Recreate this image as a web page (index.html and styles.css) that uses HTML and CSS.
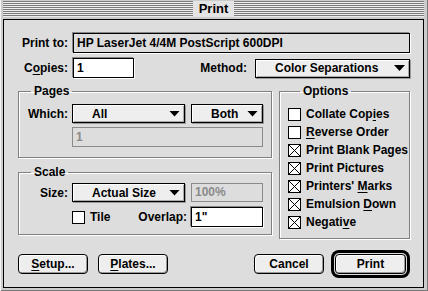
FILE: index.html
```html
<!DOCTYPE html>
<html>
<head>
<meta charset="utf-8">
<link rel="stylesheet" href="styles.css">
</head>
<body>
<div class="window">
  <div class="titlebar"><div class="stripes"></div><span class="title">Print</span><div class="stripes"></div></div>
  <div class="content">
    <div class="row r-printto">
      <span class="lbl">Print to:</span>
      <div class="static">HP LaserJet 4/4M PostScript 600DPI</div>
    </div>
    <div class="row r-copies">
      <span class="lbl">C<u>o</u>pies:</span>
      <div class="edit copies">1</div>
      <span class="lbl method-lbl">Method:</span>
      <div class="popup method"><span>Color Separations</span><i class="arrow"></i></div>
    </div>
    <div class="main">
      <div class="leftcol">
        <fieldset class="group pages">
          <legend>Pages</legend>
          <div class="grow">
            <span class="lbl">Which:</span>
            <div class="popup which"><span>All</span><i class="arrow"></i></div>
            <div class="popup both"><span>Both</span><i class="arrow"></i></div>
          </div>
          <div class="grow range-row">
            <div class="edit disabled range">1</div>
          </div>
        </fieldset>
        <fieldset class="group scale">
          <legend>Scale</legend>
          <div class="grow">
            <span class="lbl">Size:</span>
            <div class="popup which"><span>Actual Size</span><i class="arrow"></i></div>
            <div class="edit disabled pct">100%</div>
          </div>
          <div class="grow tile-row">
            <span class="check"><i class="box"></i><span class="t">Tile</span></span>
            <span class="lbl overlap-lbl">Overlap:</span>
            <div class="edit overlap">1"</div>
          </div>
        </fieldset>
      </div>
      <fieldset class="group options">
        <legend>Options</legend>
        <span class="check"><i class="box"></i><span class="t">Collate Cop<u>i</u>es</span></span>
        <span class="check"><i class="box"></i><span class="t"><u>R</u>everse Order</span></span>
        <span class="check"><i class="box on"></i><span class="t">Print Blank Pages</span></span>
        <span class="check"><i class="box on"></i><span class="t">Print Pictures</span></span>
        <span class="check"><i class="box on"></i><span class="t">Printers' <u>M</u>arks</span></span>
        <span class="check"><i class="box on"></i><span class="t">Emulsion <u>D</u>own</span></span>
        <span class="check"><i class="box on"></i><span class="t">Negati<u>v</u>e</span></span>
      </fieldset>
    </div>
    <div class="buttons">
      <div class="btn"><u>S</u>etup...</div>
      <div class="btn plates"><u>P</u>lates...</div>
      <div class="btn cancel">Cancel</div>
      <div class="btn default">Print</div>
    </div>
  </div>
</div>
</body>
</html>
```

FILE: styles.css
```css
* { box-sizing: border-box; margin: 0; padding: 0; }
html, body { width: 428px; height: 291px; overflow: hidden; }
body {
  background: #cccccc;
  font: bold 12px/14px "Liberation Sans", Arial, sans-serif;
  color: #000;
}
u { text-decoration: underline; text-underline-offset: 2px; text-decoration-thickness: 1px; }

.window {
  width: 428px;
  height: 291px;
  display: flex;
  flex-direction: column;
  padding: 0 4px 3px 3px;
  background: #cccccc;
  box-shadow: inset 1px 0 0 #f4f4f4, inset -1px -1px 0 #777;
}

.titlebar {
  height: 19px;
  display: flex;
  align-items: stretch;
  padding: 1px 0 2px;
  flex: none;
}
.stripes {
  flex: 1;
  background: repeating-linear-gradient(to bottom, #7a7a7a 0 1px, #eeeeee 1px 2px);
}
.title {
  padding: 0 6px;
  line-height: 16px;
  font-size: 13px;
  background: #e4e4e4;
}

.content {
  flex: 1;
  border: 1px solid #000;
  background: #dddddd;
  padding: 13px 13px 13px 14px;
  display: flex;
  flex-direction: column;
}

.row { display: flex; align-items: center; flex: none; }
.lbl { width: 50px; text-align: right; margin-right: 4px; flex: none; white-space: nowrap; }

.static {
  flex: 1;
  height: 20px;
  margin-left: 1px;
  border: 1px solid #000;
  box-shadow: -1px -1px 0 #888, 1px 1px 0 #fff;
  padding-left: 3px;
  line-height: 18px;
}

.r-copies { margin-top: 5px; }
.edit {
  height: 20px;
  background: #fff;
  border: 1px solid #000;
  box-shadow: -1px -1px 0 #888, 1px 1px 0 #fff;
  padding-left: 3px;
  line-height: 18px;
  flex: none;
}
.copies { width: 61px; margin-left: 1px; }
.method-lbl { width: auto; margin-left: auto; margin-right: 8px; }

.popup {
  display: flex;
  align-items: center;
  height: 19px;
  border: 1px solid #000;
  background: #eeeeee;
  box-shadow: inset 1px 1px 0 #fff, inset -1px -1px 0 #aaa, 1px 1px 0 #999;
  padding: 0 4px 0 19px;
  flex: none;
  white-space: nowrap;
}
.popup span { flex: 1; }
.arrow {
  display: block;
  width: 11px;
  height: 6px;
  background: #000;
  clip-path: polygon(0 0, 100% 0, 50% 100%);
}
.method { width: 155px; }

.main { display: flex; gap: 7px; margin-top: 6px; flex: none; }
.leftcol { display: flex; flex-direction: column; gap: 7px; width: 254px; }

fieldset.group {
  border: 1px solid #808080;
  box-shadow: 1px 1px 0 #fff, inset 1px 1px 0 #fff;
  min-width: 0;
}
legend {
  margin-left: 12px;
  padding: 0 3px;
  line-height: 14px;
}

.pages { padding: 6px 8px 10px 0; }
.grow { display: flex; align-items: center; }
.grow .lbl { width: 49px; }
.which { width: 113px; }
.both { width: 72px; margin-left: 6px; }
.range-row { margin-top: 4px; padding-left: 53px; }
.range { flex: 1; }
.disabled {
  background: #dddddd;
  border-color: #8a8a8a;
  box-shadow: none;
  color: #8a8a8a;
}

.scale { padding: 4px 8px 7px 0; }
.pct { width: 72px; margin-left: 6px; height: 19px; line-height: 17px; }
.tile-row { margin-top: 5px; padding-left: 53px; }
.overlap-lbl { width: auto; margin-left: auto; margin-right: 4px; }
.overlap { width: 72px; }

.check { display: flex; align-items: center; gap: 5px; height: 18px; white-space: nowrap; }
.box {
  width: 13px;
  height: 13px;
  border: 1px solid #000;
  background: #fff;
  flex: none;
}
.box.on {
  background:
    linear-gradient(to top right, transparent calc(50% - 0.6px), #000 calc(50% - 0.6px), #000 calc(50% + 0.6px), transparent calc(50% + 0.6px)),
    linear-gradient(to bottom right, transparent calc(50% - 0.6px), #000 calc(50% - 0.6px), #000 calc(50% + 0.6px), transparent calc(50% + 0.6px)),
    #fff;
}

.options {
  width: 131px;
  padding: 7px 2px 7px 8px;
  display: flex;
  flex-direction: column;
}

.buttons { display: flex; align-items: center; margin-top: auto; flex: none; }
.btn {
  width: 70px;
  height: 20px;
  border: 1px solid #000;
  border-radius: 4px;
  background: #eeeeee;
  box-shadow: inset 1px 1px 0 #fff, inset -1px -1px 0 #999;
  text-align: center;
  line-height: 18px;
}
.plates { margin-left: 10px; }
.cancel { margin-left: auto; }
.default {
  width: 71px;
  margin-left: 11px;
  margin-right: 4px;
  box-shadow: inset 1px 1px 0 #fff, inset -1px -1px 0 #999, 0 0 0 1px #ddd, 0 0 0 4px #000;
}
```
